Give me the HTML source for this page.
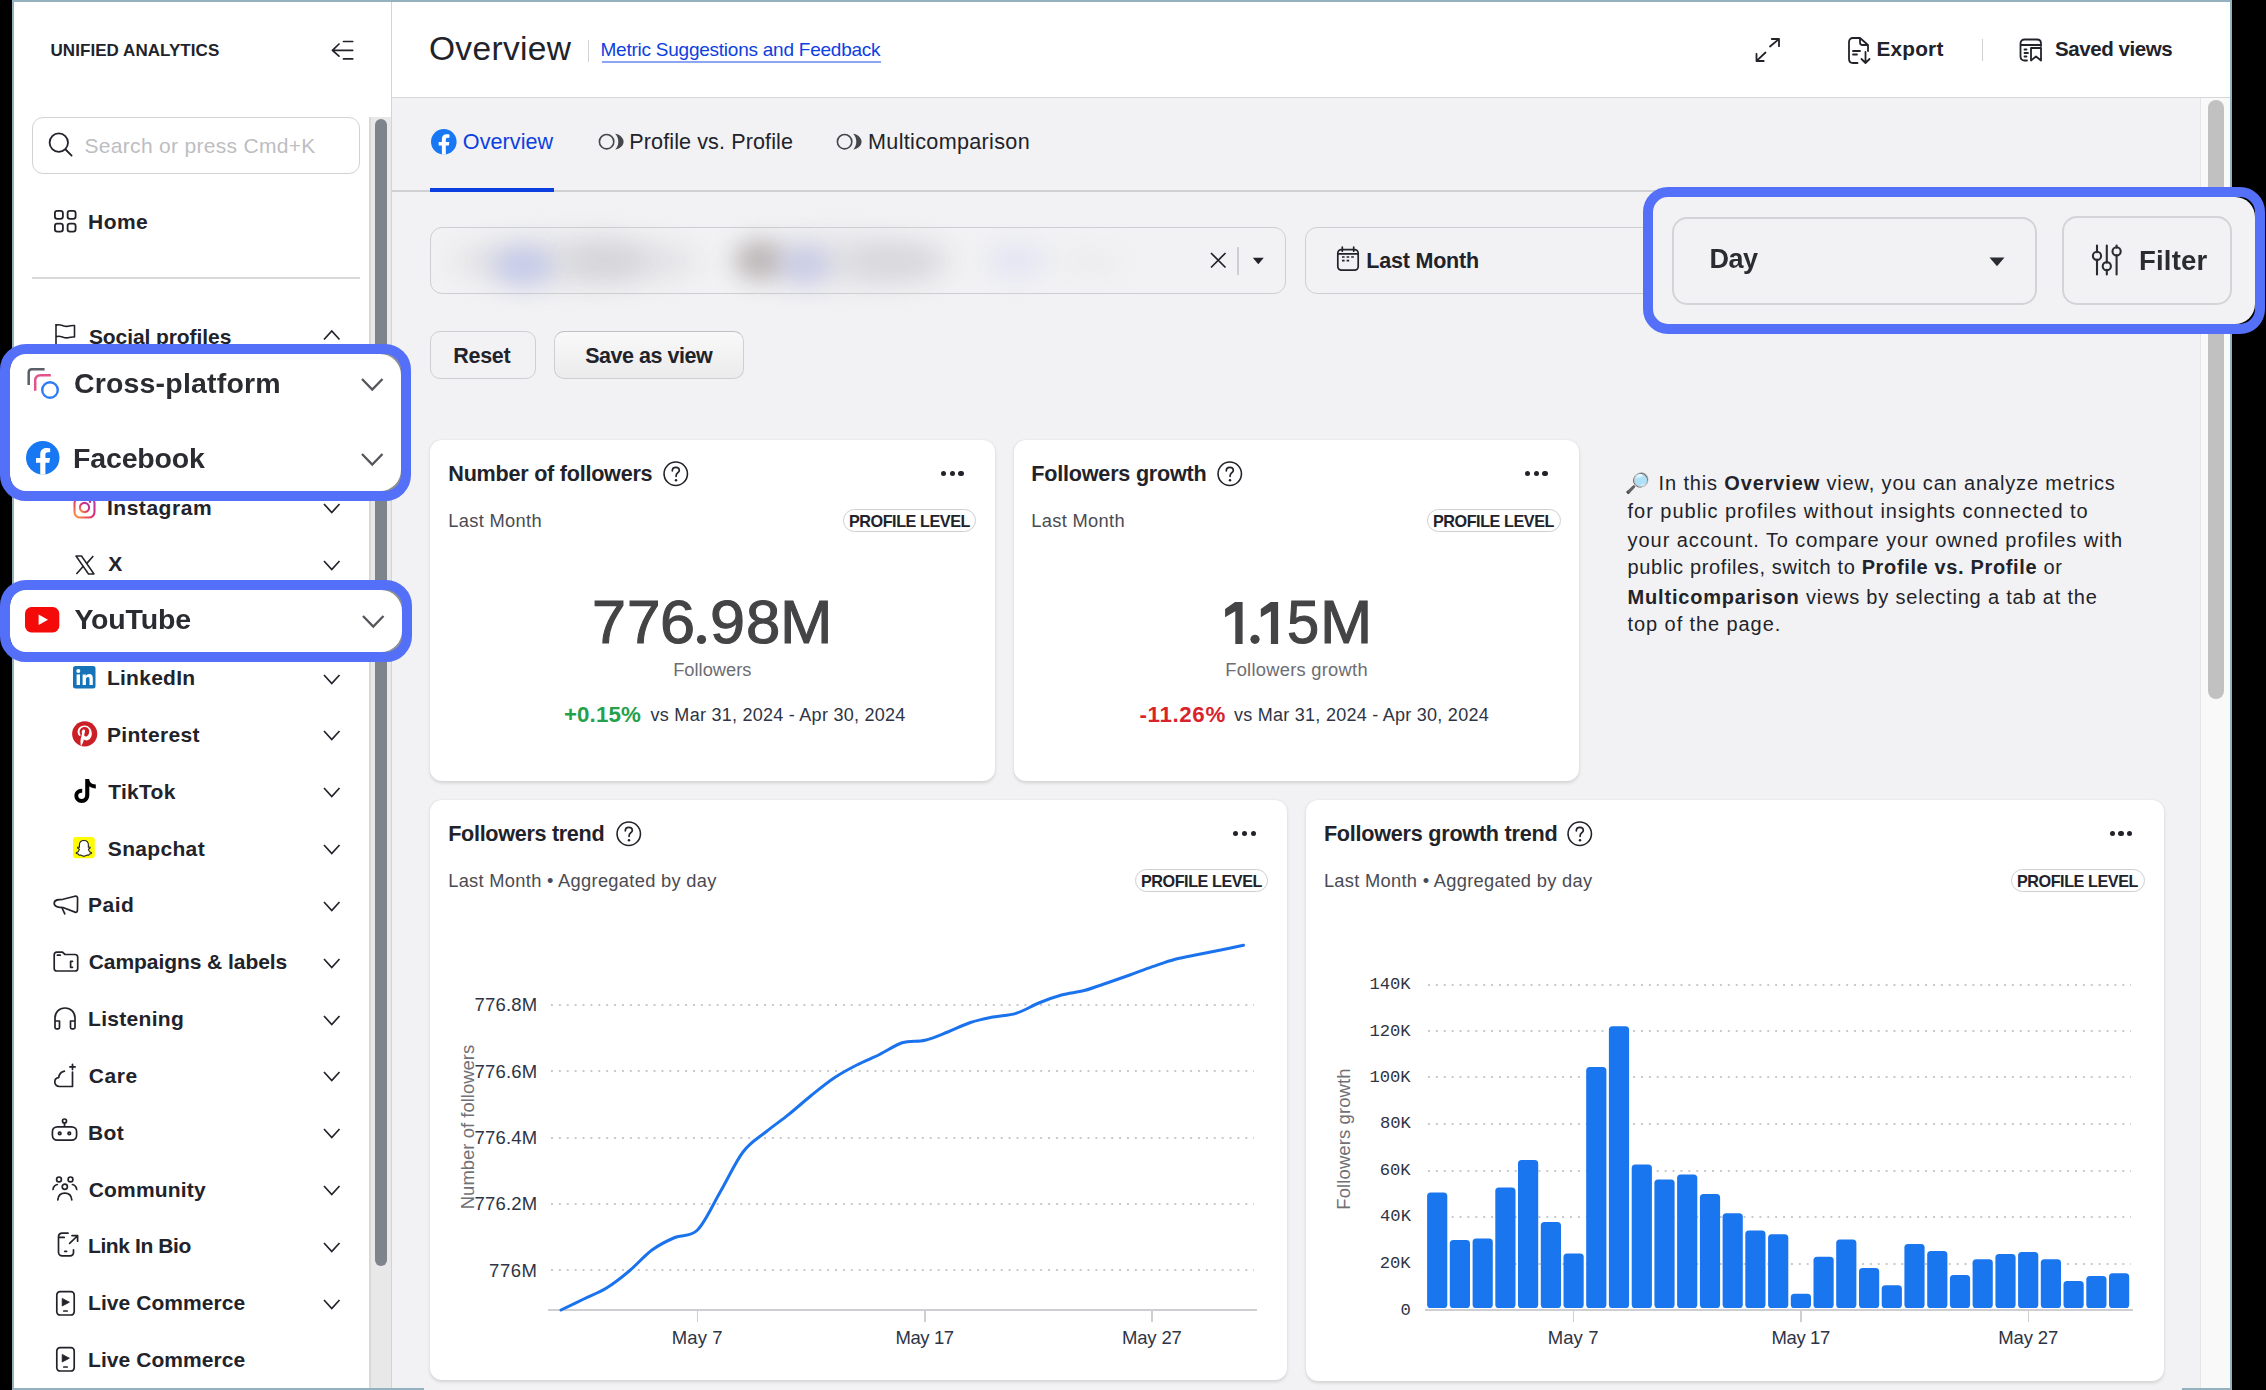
<!DOCTYPE html>
<html><head><meta charset="utf-8">
<style>
*{box-sizing:border-box;margin:0;padding:0}
html,body{width:2266px;height:1390px;overflow:hidden;background:#000;font-family:"Liberation Sans",sans-serif;color:#22232a}
.a{position:absolute}
.t{position:absolute;white-space:nowrap;line-height:1}
svg{position:absolute;overflow:visible}
</style></head><body>
<div class="a" style="left:12px;top:0;width:2220px;height:1390px;border:2px solid #93b1bf;border-bottom:none;background:#fff"></div>
<div class="a" style="left:392px;top:98px;width:1838px;height:1292px;background:#f2f2f4"></div>

<div class="a" style="left:369px;top:117px;width:22px;height:1273px;background:#e8e8e8;border-left:2px solid #d8d8d8"></div>
<div class="a" style="left:375px;top:119px;width:12px;height:1147px;background:#7f838c;border-radius:6px"></div>
<div class="a" style="left:391px;top:2px;width:1px;height:1388px;background:#d4d4d4"></div>
<div class="t" style="left:50.5px;top:41.8px;font-size:17px;font-weight:bold;color:#22232a;letter-spacing:0.06px;">UNIFIED ANALYTICS</div>
<svg style="left:330px;top:38px" width="26" height="24" viewBox="0 0 26 24"><g fill="none" stroke="#22232a" stroke-width="1.7" stroke-linecap="round" stroke-linejoin="round"><path d="M9 6 L2.4 12.3 L9 18.2 M2.4 12.3 H22.7 M13.5 3.5 H22.7 M13.5 20.9 H22.7"/></g></svg>
<div class="a" style="left:32px;top:117px;width:328px;height:57px;border:1.5px solid #d2d2d2;border-radius:11px;background:#fff"></div>
<svg style="left:46px;top:130px" width="28" height="28" viewBox="0 0 28 28"><g fill="none" stroke="#22232a" stroke-width="1.8" stroke-linecap="round"><circle cx="12.8" cy="12.6" r="9.2"/><path d="M19.6 19.5 L25.6 25.6"/></g></svg>
<div class="t" style="left:84.5px;top:135.0px;font-size:21px;font-weight:normal;color:#bdbdc2;letter-spacing:0.31px;">Search or press Cmd+K</div>
<svg style="left:52px;top:208px" width="26" height="26" viewBox="0 0 26 26"><g fill="none" stroke="#22232a" stroke-width="1.8"><rect x="2.9" y="2.9" width="8" height="8" rx="2.3"/><rect x="15.6" y="2.9" width="8" height="8" rx="2.3"/><rect x="2.9" y="15.6" width="8" height="8" rx="2.3"/><rect x="15.6" y="15.6" width="8" height="8" rx="2.3"/></g></svg>
<div class="t" style="left:88.0px;top:211.0px;font-size:21px;font-weight:bold;color:#22232a;letter-spacing:0.48px;">Home</div>
<div class="a" style="left:32px;top:277px;width:328px;height:2px;background:#d9d9dc"></div>
<svg style="left:52px;top:321px" width="26" height="26" viewBox="0 0 26 26"><g fill="none" stroke="#22232a" stroke-width="1.6" stroke-linejoin="round"><path d="M4 24 V3 M4 4.5 C8 1.5 12 7 17 5 C19 4.3 21 4.5 22.5 4.5 V16 C21 16 19 15.8 17 16.5 C12 18.5 8 13 4 16"/></g></svg>
<div class="t" style="left:88.9px;top:326.0px;font-size:21px;font-weight:bold;color:#22232a;letter-spacing:-0.08px;">Social profiles</div>
<svg style="left:322.5px;top:330px" width="17.5" height="10.5"><path d="M1 9.5 L8.75 1 L16.5 9.5" fill="none" stroke="#22232a" stroke-width="1.7"/></svg>
<div class="t" style="left:106.9px;top:496.5px;font-size:21px;font-weight:bold;color:#22232a;letter-spacing:0.54px;">Instagram</div>
<svg style="left:322.5px;top:502.99999999999994px" width="17.5" height="10.5"><path d="M1 1 L8.75 9.5 L16.5 1" fill="none" stroke="#22232a" stroke-width="1.7"/></svg>
<svg style="left:73px;top:496.29999999999995px" width="23" height="23" viewBox="0 0 23 23"><defs><linearGradient id="igg" x1="0" y1="1" x2="1" y2="0"><stop offset="0" stop-color="#f9a03a"/><stop offset="0.45" stop-color="#e1306c"/><stop offset="1" stop-color="#a83ac0"/></linearGradient></defs><g fill="none" stroke="url(#igg)" stroke-width="2.1"><rect x="1.5" y="1.5" width="20" height="20" rx="5.5"/><circle cx="11.5" cy="11.5" r="4.6"/></g><circle cx="17" cy="5.8" r="1.2" fill="#c13584"/></svg>
<div class="t" style="left:108.2px;top:553.4px;font-size:21px;font-weight:bold;color:#22232a;">X</div>
<svg style="left:322.5px;top:559.84px" width="17.5" height="10.5"><path d="M1 1 L8.75 9.5 L16.5 1" fill="none" stroke="#22232a" stroke-width="1.7"/></svg>
<svg style="left:74.5px;top:554.64px" width="20" height="20" viewBox="0 0 20 20"><path d="M1 1 H6.5 L19 19 H13.5 Z" fill="none" stroke="#22232a" stroke-width="1.5" stroke-linejoin="round"/><path d="M18.3 1 L11.6 8.6 M1.4 19 L8.3 11.2" stroke="#22232a" stroke-width="1.6"/></svg>
<div class="t" style="left:106.9px;top:667.0px;font-size:21px;font-weight:bold;color:#22232a;letter-spacing:0.27px;">LinkedIn</div>
<svg style="left:322.5px;top:673.52px" width="17.5" height="10.5"><path d="M1 1 L8.75 9.5 L16.5 1" fill="none" stroke="#22232a" stroke-width="1.7"/></svg>
<svg style="left:73px;top:666.02px" width="23" height="23" viewBox="0 0 23 23"><rect x="0" y="0" width="22.5" height="22.5" rx="2.5" fill="#1673b7"/><rect x="3.6" y="8.4" width="3.4" height="10.6" fill="#fff"/><circle cx="5.3" cy="4.9" r="2" fill="#fff"/><path d="M9.6 8.4 H12.8 V10 C13.5 8.8 14.9 8.1 16.4 8.1 C19 8.1 19.8 9.8 19.8 12.4 V19 H16.5 V13.1 C16.5 11.8 16.2 10.9 14.9 10.9 C13.6 10.9 12.9 11.9 12.9 13.3 V19 H9.6 Z" fill="#fff"/></svg>
<div class="t" style="left:106.9px;top:723.9px;font-size:21px;font-weight:bold;color:#22232a;letter-spacing:0.35px;">Pinterest</div>
<svg style="left:322.5px;top:730.36px" width="17.5" height="10.5"><path d="M1 1 L8.75 9.5 L16.5 1" fill="none" stroke="#22232a" stroke-width="1.7"/></svg>
<svg style="left:71.5px;top:721.16px" width="26" height="26" viewBox="0 0 26 26"><circle cx="12.7" cy="12.8" r="12.6" fill="#cb1f27"/><path d="M12.8 4.6 C8 4.6 5.6 8 5.6 11 C5.6 12.8 6.3 14.4 7.7 15 C8 15.1 8.2 15 8.3 14.7 L8.5 13.9 C8.6 13.6 8.5 13.5 8.3 13.2 C7.9 12.7 7.6 12 7.6 11.1 C7.6 8.4 9.6 6.1 12.8 6.1 C15.6 6.1 17.2 7.8 17.2 10.1 C17.2 13.1 15.9 15.6 13.9 15.6 C12.8 15.6 12 14.7 12.2 13.6 C12.5 12.3 13.1 10.9 13.1 9.9 C13.1 9.1 12.6 8.4 11.7 8.4 C10.6 8.4 9.7 9.6 9.7 11.1 C9.7 12.1 10 12.7 10 12.7 L8.7 18.3 C8.3 19.9 8.6 21.9 8.7 24.6 L9.4 24.8 C9.8 24 10.8 22.1 11.3 20.7 L11.9 18.2 C12.3 18.9 13.3 19.4 14.4 19.4 C17.6 19.4 19.8 16.5 19.8 12.6 C19.8 7.6 16.2 4.6 12.8 4.6 Z" fill="#fff"/></svg>
<div class="t" style="left:108.2px;top:780.7px;font-size:21px;font-weight:bold;color:#22232a;letter-spacing:0.30px;">TikTok</div>
<svg style="left:322.5px;top:787.2px" width="17.5" height="10.5"><path d="M1 1 L8.75 9.5 L16.5 1" fill="none" stroke="#22232a" stroke-width="1.7"/></svg>
<svg style="left:72.5px;top:777.5px" width="24" height="26" viewBox="0 0 24 26"><path d="M12.2 1 H16.2 C16.4 4 18.3 6.2 22.8 6.5 V10.4 C20.2 10.4 18.1 9.6 16.3 8.2 V17 C16.3 21.6 13 25 8.8 25 C4.6 25 1.4 21.8 1.4 17.8 C1.4 13.6 4.8 10.5 9.2 10.8 V14.8 C7 14.4 5.2 15.8 5.2 17.8 C5.2 19.8 6.8 21.1 8.7 21.1 C10.8 21.1 12.2 19.7 12.2 17.3 Z" fill="#000"/></svg>
<div class="t" style="left:107.8px;top:837.6px;font-size:21px;font-weight:bold;color:#22232a;letter-spacing:0.33px;">Snapchat</div>
<svg style="left:322.5px;top:844.04px" width="17.5" height="10.5"><path d="M1 1 L8.75 9.5 L16.5 1" fill="none" stroke="#22232a" stroke-width="1.7"/></svg>
<svg style="left:73.3px;top:836.6399999999999px" width="22" height="22" viewBox="0 0 22 22"><rect x="0" y="0" width="21.8" height="21.3" rx="3" fill="#fffc00"/><path d="M10.9 3.5 C13.9 3.5 15.4 5.6 15.4 8.1 L15.3 10.2 C15.8 10.4 16.5 10 17 10.2 C17.5 10.5 17.2 11.2 16.6 11.5 C16 11.8 15.3 11.9 15.4 12.5 C15.7 13.9 17 15.2 18.3 15.6 C18.8 15.8 18.6 16.3 18.1 16.5 C17.4 16.8 16.6 16.8 16.3 17.2 C16.1 17.6 16 18.2 15.5 18.2 C14.8 18.2 14.2 17.9 13.3 18.3 C12.5 18.6 12 19.3 10.9 19.3 C9.8 19.3 9.3 18.6 8.5 18.3 C7.6 17.9 7 18.2 6.3 18.2 C5.8 18.2 5.7 17.6 5.5 17.2 C5.2 16.8 4.4 16.8 3.7 16.5 C3.2 16.3 3 15.8 3.5 15.6 C4.8 15.2 6.1 13.9 6.4 12.5 C6.5 11.9 5.8 11.8 5.2 11.5 C4.6 11.2 4.3 10.5 4.8 10.2 C5.3 10 6 10.4 6.5 10.2 L6.4 8.1 C6.4 5.6 7.9 3.5 10.9 3.5 Z" fill="#fff" stroke="#222" stroke-width="1.1"/></svg>
<div class="t" style="left:88.0px;top:894.4px;font-size:21px;font-weight:bold;color:#22232a;letter-spacing:0.47px;">Paid</div>
<svg style="left:322.5px;top:900.88px" width="17.5" height="10.5"><path d="M1 1 L8.75 9.5 L16.5 1" fill="none" stroke="#22232a" stroke-width="1.7"/></svg>
<svg style="left:51.5px;top:894.68px" width="28" height="24" viewBox="0 0 28 24"><g fill="none" stroke="#22232a" stroke-width="1.7" stroke-linecap="round" stroke-linejoin="round"><path d="M11 12.5 C6.5 12.5 2.2 11.8 2.2 8.2 C2.2 4.6 6.5 4.3 11 4.3 L23 1.2 C24.5 1 25.5 1.6 25.6 3 L25.4 15.5 C25.4 17 24.4 17.6 23 17.1 Z M9.8 12.5 L12.8 18.8"/></g></svg>
<div class="t" style="left:88.7px;top:951.2px;font-size:21px;font-weight:bold;color:#22232a;letter-spacing:-0.06px;">Campaigns &amp; labels</div>
<svg style="left:322.5px;top:957.72px" width="17.5" height="10.5"><path d="M1 1 L8.75 9.5 L16.5 1" fill="none" stroke="#22232a" stroke-width="1.7"/></svg>
<svg style="left:51.5px;top:949.52px" width="28" height="24" viewBox="0 0 28 24"><g fill="none" stroke="#22232a" stroke-width="1.7" stroke-linecap="round" stroke-linejoin="round"><path d="M2.2 4.8 C2.2 3.2 3.2 2.2 4.8 2.2 H10.5 L13 4.5 H23 C24.8 4.5 25.7 5.5 25.7 7.2 V18.5 C25.7 20.2 24.8 21 23 21 H4.8 C3.2 21 2.2 20.2 2.2 18.5 Z M5.4 5.2 H8.2 M20.5 11.3 H18.6 V17.3 H20.5"/></g></svg>
<div class="t" style="left:88.0px;top:1008.1px;font-size:21px;font-weight:bold;color:#22232a;letter-spacing:0.31px;">Listening</div>
<svg style="left:322.5px;top:1014.5600000000002px" width="17.5" height="10.5"><path d="M1 1 L8.75 9.5 L16.5 1" fill="none" stroke="#22232a" stroke-width="1.7"/></svg>
<svg style="left:52px;top:1005.8600000000001px" width="26" height="24" viewBox="0 0 26 24"><g fill="none" stroke="#22232a" stroke-width="1.7" stroke-linecap="round" stroke-linejoin="round"><path d="M3 16.5 V12 C3 6.3 7 2 13 2 C19 2 23 6.3 23 12 V16.5 M3 15 H7.5 V21.5 C7.5 22.2 7 22.8 6.2 22.8 H4.3 C3.5 22.8 3 22.2 3 21.5 Z M23 15 H18.5 V21.5 C18.5 22.2 19 22.8 19.8 22.8 H21.7 C22.5 22.8 23 22.2 23 21.5 Z"/></g></svg>
<div class="t" style="left:88.7px;top:1064.9px;font-size:21px;font-weight:bold;color:#22232a;letter-spacing:0.62px;">Care</div>
<svg style="left:322.5px;top:1071.4px" width="17.5" height="10.5"><path d="M1 1 L8.75 9.5 L16.5 1" fill="none" stroke="#22232a" stroke-width="1.7"/></svg>
<svg style="left:53px;top:1062.7px" width="26" height="25" viewBox="0 0 26 25"><g fill="none" stroke="#22232a" stroke-width="1.7" stroke-linecap="round" stroke-linejoin="round"><path d="M19.5 9 V23.5 H6.5 C3.5 23.5 1.8 21.3 1.8 19 C1.8 16.5 3.6 14.8 5.7 14.7 C6 11.4 8 9 11.4 8.2 M19.5 1.3 V6.5 M16.9 3.9 H22.1"/></g></svg>
<div class="t" style="left:88.0px;top:1121.8px;font-size:21px;font-weight:bold;color:#22232a;letter-spacing:0.41px;">Bot</div>
<svg style="left:322.5px;top:1128.24px" width="17.5" height="10.5"><path d="M1 1 L8.75 9.5 L16.5 1" fill="none" stroke="#22232a" stroke-width="1.7"/></svg>
<svg style="left:51px;top:1117.54px" width="28" height="25" viewBox="0 0 28 25"><g fill="none" stroke="#22232a" stroke-width="1.7" stroke-linecap="round" stroke-linejoin="round"><circle cx="13.5" cy="3" r="2"/><path d="M13.5 5 V8.8 M6.5 8.8 H20.5 C23.5 8.8 25.6 10.9 25.6 13.7 V17.3 C25.6 20.2 23.5 22.2 20.5 22.2 H6.5 C3.5 22.2 1.4 20.2 1.4 17.3 V13.7 C1.4 10.9 3.5 8.8 6.5 8.8 Z"/><circle cx="8.7" cy="15.4" r="1.3"/><circle cx="18.3" cy="15.4" r="1.3"/></g></svg>
<div class="t" style="left:88.7px;top:1178.6px;font-size:21px;font-weight:bold;color:#22232a;letter-spacing:0.19px;">Community</div>
<svg style="left:322.5px;top:1185.0800000000002px" width="17.5" height="10.5"><path d="M1 1 L8.75 9.5 L16.5 1" fill="none" stroke="#22232a" stroke-width="1.7"/></svg>
<svg style="left:51px;top:1175.88px" width="28" height="26" viewBox="0 0 28 26"><g fill="none" stroke="#22232a" stroke-width="1.7" stroke-linecap="round" stroke-linejoin="round"><circle cx="8" cy="3.4" r="2.4"/><circle cx="19.5" cy="3.4" r="2.4"/><circle cx="13.8" cy="10.8" r="2.6"/><path d="M2 13.5 C2.3 10.8 4 9 6.3 8.5 M25.7 13.5 C25.4 10.8 23.7 9 21.4 8.5 M6.8 23.8 C7.2 19.8 10 17.2 13.8 17.2 C17.6 17.2 20.4 19.8 20.8 23.8"/></g></svg>
<div class="t" style="left:88.0px;top:1235.4px;font-size:21px;font-weight:bold;color:#22232a;letter-spacing:-0.40px;">Link In Bio</div>
<svg style="left:322.5px;top:1241.92px" width="17.5" height="10.5"><path d="M1 1 L8.75 9.5 L16.5 1" fill="none" stroke="#22232a" stroke-width="1.7"/></svg>
<svg style="left:56px;top:1231.22px" width="24" height="27" viewBox="0 0 24 27"><g fill="none" stroke="#22232a" stroke-width="1.7" stroke-linecap="round" stroke-linejoin="round"><path d="M12 2.2 H6.3 C4.2 2.2 2.5 3.7 2.5 5.9 V21.3 C2.5 23.4 4.2 24.9 6.3 24.9 H13.8 C15.9 24.9 17.5 23.4 17.5 21.3 V18.8 M2.8 6.4 H8.2 M8.8 20.3 H10.6 M13.6 12.3 L21.3 5 M16 4.6 H21.6 V10.2"/></g></svg>
<div class="t" style="left:88.0px;top:1292.3px;font-size:21px;font-weight:bold;color:#22232a;letter-spacing:0.07px;">Live Commerce</div>
<svg style="left:322.5px;top:1298.76px" width="17.5" height="10.5"><path d="M1 1 L8.75 9.5 L16.5 1" fill="none" stroke="#22232a" stroke-width="1.7"/></svg>
<svg style="left:55px;top:1289.56px" width="22" height="27" viewBox="0 0 22 27"><g fill="none" stroke="#22232a" stroke-width="1.7" stroke-linecap="round" stroke-linejoin="round"><rect x="1.8" y="1.6" width="17.4" height="23.4" rx="3.3"/><path d="M8.8 21 H12.2"/></g><path d="M7.2 8.4 L14.4 12.2 L7.2 16 Z" fill="#22232a" stroke="#22232a" stroke-width="0.8" stroke-linejoin="round"/></svg>
<div class="t" style="left:88.0px;top:1349.1px;font-size:21px;font-weight:bold;color:#22232a;letter-spacing:0.07px;">Live Commerce</div>
<svg style="left:55px;top:1346.4px" width="22" height="27" viewBox="0 0 22 27"><g fill="none" stroke="#22232a" stroke-width="1.7" stroke-linecap="round" stroke-linejoin="round"><rect x="1.8" y="1.6" width="17.4" height="23.4" rx="3.3"/><path d="M8.8 21 H12.2"/></g><path d="M7.2 8.4 L14.4 12.2 L7.2 16 Z" fill="#22232a" stroke="#22232a" stroke-width="0.8" stroke-linejoin="round"/></svg>
<div class="a" style="left:392px;top:97px;width:1838px;height:1px;background:#d6d6d6"></div>
<div class="t" style="left:428.9px;top:32.3px;font-size:33.5px;font-weight:normal;color:#22232a;letter-spacing:0.35px;">Overview</div>
<div class="a" style="left:587.5px;top:39.5px;width:1.2px;height:22px;background:#d4d4d8"></div>
<div class="t" style="left:600.5px;top:40.1px;font-size:19px;font-weight:normal;color:#0d40e0;letter-spacing:-0.24px;">Metric Suggestions and Feedback</div>
<div class="a" style="left:602px;top:61px;width:279px;height:1.9px;background:#8ea4f5"></div>
<svg style="left:1754px;top:37px" width="28" height="27" viewBox="0 0 28 27"><g fill="none" stroke="#22232a" stroke-width="1.8" stroke-linecap="round" stroke-linejoin="round"><path d="M16 9.5 L24.6 2.4 M17.8 2 H25 V9.2 M11.5 15.5 L2.9 23.6 M2.5 16.8 V24 H9.7"/></g></svg>
<svg style="left:1847px;top:36px" width="28" height="29" viewBox="0 0 28 29"><g fill="none" stroke="#22232a" stroke-width="1.8" stroke-linecap="round" stroke-linejoin="round"><path d="M13 2 H6 C3.5 2 2 3.5 2 6 V23 C2 25.5 3.5 27 6 27 H10.5 M13 2 V6.5 C13 8 14 9 15.5 9 H21 M13 2 L21 9 V15 M6 15 H13 M6 18.5 H10 M18.5 16 V27 M14.5 23 L18.5 27 L22.5 23"/></g></svg>
<div class="t" style="left:1876.5px;top:39.2px;font-size:20.8px;font-weight:bold;color:#22232a;letter-spacing:0.19px;">Export</div>
<div class="a" style="left:1981.5px;top:39px;width:1.5px;height:22px;background:#d0d0d4"></div>
<svg style="left:2019px;top:38px" width="26" height="25" viewBox="0 0 26 25"><g fill="none" stroke="#22232a" stroke-width="1.8" stroke-linecap="round" stroke-linejoin="round"><path d="M8 22.5 H5.5 C3 22.5 1.5 21 1.5 18.5 V5.5 C1.5 3 3 1.5 5.5 1.5 H18 C20.5 1.5 22 3 22 5.5 V8 M1.5 7 H22 M5.5 11.5 H7.5 M5.5 15 H9 M5.5 18.5 H7.5 M12 10 H22 V22.5 L17 18.5 L12 22.5 Z"/></g></svg>
<div class="t" style="left:2055.1px;top:39.4px;font-size:20.5px;font-weight:bold;color:#22232a;letter-spacing:-0.43px;">Saved views</div>
<div class="a" style="left:2200px;top:98px;width:30px;height:1292px;background:#f9f9f9;border-left:1.5px solid #e6e6e6"></div>
<div class="a" style="left:2208px;top:100px;width:16px;height:599px;background:#c1c1c1;border-radius:8px"></div>
<div class="a" style="left:392px;top:190px;width:1808px;height:1.8px;background:#d0d0d3"></div>
<svg style="left:431.4px;top:129.3px" width="25.6" height="25.6" viewBox="0 0 24 24"><circle cx="12" cy="12" r="12" fill="#1877f2"/><path d="M16.7 15.5 L17.2 12.1 H13.9 V9.9 C13.9 9 14.4 8.1 15.8 8.1 H17.3 V5.2 C17.3 5.2 15.9 5 14.6 5 C11.9 5 10.2 6.6 10.2 9.6 V12.1 H7.2 V15.5 H10.2 V24 C10.8 24.1 11.4 24.1 12 24.1 C12.6 24.1 13.3 24.1 13.9 24 V15.5 Z" fill="#fff"/></svg>
<div class="t" style="left:462.8px;top:130.6px;font-size:21.6px;font-weight:normal;color:#0b3fe0;letter-spacing:0.06px;">Overview</div>
<div class="a" style="left:430px;top:188px;width:124px;height:3.5px;background:#0b3fe0"></div>
<svg style="left:598px;top:133px" width="27" height="18" viewBox="0 0 27 18"><circle cx="8.6" cy="8.7" r="7.2" fill="none" stroke="#45464d" stroke-width="1.6"/><path d="M17.2 0.8 C21 1.3 25.6 4.4 25.6 8.7 C25.6 13 21 16.1 17.2 16.6 C19.2 14.6 20.3 11.8 20.3 8.7 C20.3 5.6 19.2 2.8 17.2 0.8 Z" fill="#45464d"/></svg>
<div class="t" style="left:629.3px;top:130.6px;font-size:21.6px;font-weight:normal;color:#22232a;letter-spacing:0.09px;">Profile vs. Profile</div>
<svg style="left:836px;top:133px" width="27" height="18" viewBox="0 0 27 18"><circle cx="8.6" cy="8.7" r="7.2" fill="none" stroke="#45464d" stroke-width="1.6"/><path d="M17.2 0.8 C21 1.3 25.6 4.4 25.6 8.7 C25.6 13 21 16.1 17.2 16.6 C19.2 14.6 20.3 11.8 20.3 8.7 C20.3 5.6 19.2 2.8 17.2 0.8 Z" fill="#45464d"/></svg>
<div class="t" style="left:868.0px;top:130.6px;font-size:21.6px;font-weight:normal;color:#22232a;letter-spacing:0.32px;">Multicomparison</div>
<div class="a" style="left:430px;top:227px;width:856px;height:67px;border:1.5px solid #cfcfd3;border-radius:12px;overflow:hidden"></div>
<div class="a" style="left:450px;top:238px;width:250px;height:46px;border-radius:50%;background:rgba(200,200,205,0.40);filter:blur(14px)"></div>
<div class="a" style="left:492px;top:246px;width:62px;height:40px;border-radius:50%;background:rgba(170,180,235,0.50);filter:blur(12px)"></div>
<div class="a" style="left:565px;top:242px;width:80px;height:38px;border-radius:50%;background:rgba(195,195,200,0.40);filter:blur(13px)"></div>
<div class="a" style="left:728px;top:238px;width:225px;height:46px;border-radius:50%;background:rgba(205,205,210,0.45);filter:blur(14px)"></div>
<div class="a" style="left:735px;top:240px;width:48px;height:40px;border-radius:50%;background:rgba(160,150,148,0.55);filter:blur(11px)"></div>
<div class="a" style="left:780px;top:246px;width:50px;height:38px;border-radius:50%;background:rgba(175,182,232,0.50);filter:blur(12px)"></div>
<div class="a" style="left:850px;top:244px;width:90px;height:36px;border-radius:50%;background:rgba(200,200,204,0.40);filter:blur(13px)"></div>
<div class="a" style="left:985px;top:244px;width:62px;height:34px;border-radius:50%;background:rgba(200,205,240,0.35);filter:blur(12px)"></div>
<div class="a" style="left:1060px;top:248px;width:60px;height:28px;border-radius:50%;background:rgba(225,225,230,0.3);filter:blur(12px)"></div>
<svg style="left:1209px;top:251px" width="18" height="18" viewBox="0 0 18 18"><path d="M2 2 L16.5 16.5 M16.5 2 L2 16.5" stroke="#22232a" stroke-width="1.7"/></svg>
<div class="a" style="left:1237.2px;top:246.5px;width:1.5px;height:28px;background:#cfcfd3"></div>
<svg style="left:1252px;top:257px" width="13" height="8" viewBox="0 0 13 8"><path d="M0.8 0.8 H11.8 L6.3 7.2 Z" fill="#22232a"/></svg>
<div class="a" style="left:1305px;top:227px;width:400px;height:67px;border:1.5px solid #cfcfd3;border-radius:12px"></div>
<svg style="left:1336px;top:246px" width="24" height="26" viewBox="0 0 24 26"><g fill="none" stroke="#22232a" stroke-width="1.7" stroke-linecap="round"><rect x="1.8" y="3.6" width="20.4" height="20.6" rx="3.6"/><path d="M6.3 1.2 V5.2 M17.7 1.2 V5.2 M1.8 7.8 H22.2"/></g><path d="M6 11 H8.6 M10.6 11 H13.2 M15.2 11 H17.8 M6 14.6 H8.6 M10.6 14.6 H13.2" stroke="#22232a" stroke-width="1.6"/></svg>
<div class="t" style="left:1366.3px;top:251.1px;font-size:21.5px;font-weight:bold;color:#22232a;letter-spacing:-0.20px;">Last Month</div>
<div class="a" style="left:430px;top:331px;width:106px;height:48px;border:1.4px solid #cfcfd3;border-radius:10px"></div>
<div class="t" style="left:453.3px;top:345.8px;font-size:21.5px;font-weight:bold;color:#22232a;letter-spacing:-0.32px;">Reset</div>
<div class="a" style="left:554px;top:331px;width:190px;height:48px;border:1.4px solid #cfcfd3;border-top-color:#c0c0c4;border-radius:10px;background:linear-gradient(#f9f9f9,#ebebeb)"></div>
<div class="t" style="left:585.2px;top:345.8px;font-size:21.5px;font-weight:bold;color:#22232a;letter-spacing:-0.47px;">Save as view</div>
<div class="a" style="left:429.5px;top:439.5px;width:565.5px;height:341.5px;background:#fff;border-radius:12px;box-shadow:0 1.5px 3.5px rgba(0,0,0,0.13),0 0 1px rgba(0,0,0,0.06)"></div>
<div class="t" style="left:448.3px;top:462.7px;font-size:21.6px;font-weight:bold;color:#22232a;letter-spacing:-0.25px;">Number of followers</div>
<svg style="left:663.2px;top:460.5px" width="25.5" height="25.5" viewBox="0 0 25.5 25.5"><circle cx="12.75" cy="12.75" r="11.7" fill="none" stroke="#22232a" stroke-width="1.6"/><path d="M9.3 9.8 C9.3 7.6 10.9 6.3 12.8 6.3 C14.8 6.3 16.3 7.6 16.3 9.4 C16.3 11.5 13.1 12 13.1 14.7 V15.3" fill="none" stroke="#22232a" stroke-width="1.7" stroke-linecap="round"/><circle cx="13" cy="19.2" r="1.25" fill="#22232a"/></svg>
<div class="a" style="left:940.8px;top:470.6px;width:5.2px;height:5.2px;border-radius:50%;background:#22232a"></div><div class="a" style="left:949.6px;top:470.6px;width:5.2px;height:5.2px;border-radius:50%;background:#22232a"></div><div class="a" style="left:958.4px;top:470.6px;width:5.2px;height:5.2px;border-radius:50%;background:#22232a"></div>
<div class="t" style="left:448.3px;top:511.8px;font-size:18.3px;font-weight:normal;color:#4a4b52;letter-spacing:0.32px;">Last Month</div>
<div class="a" style="left:843px;top:509px;width:133px;height:23px;border:1.3px solid #cfcfd3;border-radius:12px;background:#fff"></div><div class="t" style="left:848.9px;top:513.3px;font-size:16.2px;font-weight:bold;color:#22232a;letter-spacing:-0.44px;">PROFILE LEVEL</div>
<div class="t" style="left:592.40px;top:592.3px;font-size:61px;font-weight:normal;color:#444446;transform-origin:0 0;transform:scaleX(1.002);-webkit-text-stroke:1.1px #444446;">7</div><div class="t" style="left:626.64px;top:592.3px;font-size:61px;font-weight:normal;color:#444446;transform-origin:0 0;transform:scaleX(0.987);-webkit-text-stroke:1.1px #444446;">7</div><div class="t" style="left:659.50px;top:592.3px;font-size:61px;font-weight:normal;color:#444446;transform-origin:0 0;transform:scaleX(1.033);-webkit-text-stroke:1.1px #444446;">6</div><div class="t" style="left:709.61px;top:592.3px;font-size:61px;font-weight:normal;color:#444446;transform-origin:0 0;transform:scaleX(1.033);-webkit-text-stroke:1.1px #444446;">9</div><div class="t" style="left:745.97px;top:592.3px;font-size:61px;font-weight:normal;color:#444446;transform-origin:0 0;transform:scaleX(1.012);-webkit-text-stroke:1.1px #444446;">8</div><div class="t" style="left:780.31px;top:592.3px;font-size:61px;font-weight:normal;color:#444446;transform-origin:0 0;transform:scaleX(1.033);-webkit-text-stroke:1.1px #444446;">M</div>
<svg style="left:0px;top:0px" width="2266" height="1390" viewBox="0 0 2266 1390"><circle cx="701.5" cy="639.5" r="4.6" fill="#444446"/></svg>
<div class="t" style="left:673.2px;top:660.8px;font-size:18.3px;font-weight:normal;color:#6d6d72;">Followers</div>
<div class="t" style="left:563.9px;top:703.9px;font-size:22.3px;font-weight:bold;color:#23a14b;letter-spacing:0.14px;">+0.15%</div>
<div class="t" style="left:650.6px;top:706.1px;font-size:18px;font-weight:normal;color:#2e3444;letter-spacing:0.26px;">vs Mar 31, 2024 - Apr 30, 2024</div>
<div class="a" style="left:1013.5px;top:439.5px;width:565.5px;height:341.5px;background:#fff;border-radius:12px;box-shadow:0 1.5px 3.5px rgba(0,0,0,0.13),0 0 1px rgba(0,0,0,0.06)"></div>
<div class="t" style="left:1031.3px;top:462.7px;font-size:21.6px;font-weight:bold;color:#22232a;letter-spacing:-0.22px;">Followers growth</div>
<svg style="left:1216.6px;top:460.5px" width="25.5" height="25.5" viewBox="0 0 25.5 25.5"><circle cx="12.75" cy="12.75" r="11.7" fill="none" stroke="#22232a" stroke-width="1.6"/><path d="M9.3 9.8 C9.3 7.6 10.9 6.3 12.8 6.3 C14.8 6.3 16.3 7.6 16.3 9.4 C16.3 11.5 13.1 12 13.1 14.7 V15.3" fill="none" stroke="#22232a" stroke-width="1.7" stroke-linecap="round"/><circle cx="13" cy="19.2" r="1.25" fill="#22232a"/></svg>
<div class="a" style="left:1524.8px;top:470.6px;width:5.2px;height:5.2px;border-radius:50%;background:#22232a"></div><div class="a" style="left:1533.6px;top:470.6px;width:5.2px;height:5.2px;border-radius:50%;background:#22232a"></div><div class="a" style="left:1542.4px;top:470.6px;width:5.2px;height:5.2px;border-radius:50%;background:#22232a"></div>
<div class="t" style="left:1031.3px;top:511.8px;font-size:18.3px;font-weight:normal;color:#4a4b52;letter-spacing:0.32px;">Last Month</div>
<div class="a" style="left:1427px;top:509px;width:134px;height:23px;border:1.3px solid #cfcfd3;border-radius:12px;background:#fff"></div><div class="t" style="left:1432.9px;top:513.3px;font-size:16.2px;font-weight:bold;color:#22232a;letter-spacing:-0.44px;">PROFILE LEVEL</div>
<div class="t" style="left:1286.83px;top:592.3px;font-size:61px;font-weight:normal;color:#444446;transform-origin:0 0;transform:scaleX(0.949);-webkit-text-stroke:1.1px #444446;">5</div><div class="t" style="left:1319.54px;top:592.3px;font-size:61px;font-weight:normal;color:#444446;transform-origin:0 0;transform:scaleX(1.028);-webkit-text-stroke:1.1px #444446;">M</div>
<svg style="left:0px;top:0px" width="2266" height="1390" viewBox="0 0 2266 1390"><path d="M1235.0 601.9 H1242.6 V643.9 H1235.3 V611.2 L1225.1 617.3 V609.1 Z M1270.7 601.9 H1278.1 V643.9 H1270.9 V611.2 L1260.8 617.3 V609.1 Z" fill="#444446"/><circle cx="1255" cy="639.3" r="4.6" fill="#444446"/></svg>
<div class="t" style="left:1225.2px;top:660.8px;font-size:18.3px;font-weight:normal;color:#6d6d72;letter-spacing:0.28px;">Followers growth</div>
<div class="t" style="left:1139.5px;top:703.9px;font-size:22.3px;font-weight:bold;color:#d8232d;letter-spacing:0.65px;">-11.26%</div>
<div class="t" style="left:1234.0px;top:706.1px;font-size:18px;font-weight:normal;color:#2e3444;letter-spacing:0.26px;">vs Mar 31, 2024 - Apr 30, 2024</div>
<div class="t" style="left:1624.6px;top:472.5px;font-size:20px;font-weight:normal;color:#22232a;">&#x1F50E;</div>
<div class="t" style="left:1658.6px;top:472.5px;font-size:20px;color:#22232a;letter-spacing:0.85px">In this <b>Overview</b> view, you can analyze metrics</div>
<div class="t" style="left:1627.6px;top:501.1px;font-size:20px;color:#22232a;letter-spacing:0.97px">for public profiles without insights connected to</div>
<div class="t" style="left:1627.6px;top:529.8px;font-size:20px;color:#22232a;letter-spacing:0.93px">your account. To compare your owned profiles with</div>
<div class="t" style="left:1627.6px;top:557.4px;font-size:20px;color:#22232a;letter-spacing:0.64px">public profiles, switch to <b>Profile vs. Profile</b> or</div>
<div class="t" style="left:1627.6px;top:586.5px;font-size:20px;color:#22232a;letter-spacing:0.80px"><b>Multicomparison</b> views by selecting a tab at the</div>
<div class="t" style="left:1627.6px;top:614.1px;font-size:20px;color:#22232a;letter-spacing:0.91px">top of the page.</div>
<div class="a" style="left:429.8px;top:799.8px;width:856.8px;height:580.6000000000001px;background:#fff;border-radius:12px;box-shadow:0 1.5px 3.5px rgba(0,0,0,0.13),0 0 1px rgba(0,0,0,0.06)"></div>
<div class="t" style="left:448.2px;top:822.5px;font-size:21.6px;font-weight:bold;color:#22232a;letter-spacing:-0.31px;">Followers trend</div>
<svg style="left:615.5px;top:820.7px" width="25.5" height="25.5" viewBox="0 0 25.5 25.5"><circle cx="12.75" cy="12.75" r="11.7" fill="none" stroke="#22232a" stroke-width="1.6"/><path d="M9.3 9.8 C9.3 7.6 10.9 6.3 12.8 6.3 C14.8 6.3 16.3 7.6 16.3 9.4 C16.3 11.5 13.1 12 13.1 14.7 V15.3" fill="none" stroke="#22232a" stroke-width="1.7" stroke-linecap="round"/><circle cx="13" cy="19.2" r="1.25" fill="#22232a"/></svg>
<div class="a" style="left:1232.9px;top:830.6px;width:5.2px;height:5.2px;border-radius:50%;background:#22232a"></div><div class="a" style="left:1241.7px;top:830.6px;width:5.2px;height:5.2px;border-radius:50%;background:#22232a"></div><div class="a" style="left:1250.5px;top:830.6px;width:5.2px;height:5.2px;border-radius:50%;background:#22232a"></div>
<div class="t" style="left:448.2px;top:872.0px;font-size:18.3px;font-weight:normal;color:#4a4b52;letter-spacing:0.30px;">Last Month • Aggregated by day</div>
<div class="a" style="left:1135px;top:869px;width:133px;height:23px;border:1.3px solid #cfcfd3;border-radius:12px;background:#fff"></div><div class="t" style="left:1140.9px;top:873.3px;font-size:16.2px;font-weight:bold;color:#22232a;letter-spacing:-0.44px;">PROFILE LEVEL</div>
<div class="a" style="left:548px;top:1003.8px;width:706px;height:2px;background-image:radial-gradient(circle,#c9c9cc 0.9px,transparent 1.1px);background-size:7.9px 2px;background-repeat:repeat-x"></div>
<div class="t" style="left:474.5px;top:996.0px;font-size:18.5px;font-weight:normal;color:#2e3444;letter-spacing:0.18px;">776.8M</div>
<div class="a" style="left:548px;top:1070.3px;width:706px;height:2px;background-image:radial-gradient(circle,#c9c9cc 0.9px,transparent 1.1px);background-size:7.9px 2px;background-repeat:repeat-x"></div>
<div class="t" style="left:474.5px;top:1062.5px;font-size:18.5px;font-weight:normal;color:#2e3444;letter-spacing:0.18px;">776.6M</div>
<div class="a" style="left:548px;top:1136.7px;width:706px;height:2px;background-image:radial-gradient(circle,#c9c9cc 0.9px,transparent 1.1px);background-size:7.9px 2px;background-repeat:repeat-x"></div>
<div class="t" style="left:474.5px;top:1128.9px;font-size:18.5px;font-weight:normal;color:#2e3444;letter-spacing:0.18px;">776.4M</div>
<div class="a" style="left:548px;top:1202.9px;width:706px;height:2px;background-image:radial-gradient(circle,#c9c9cc 0.9px,transparent 1.1px);background-size:7.9px 2px;background-repeat:repeat-x"></div>
<div class="t" style="left:474.5px;top:1195.1px;font-size:18.5px;font-weight:normal;color:#2e3444;letter-spacing:0.18px;">776.2M</div>
<div class="a" style="left:548px;top:1269.3px;width:706px;height:2px;background-image:radial-gradient(circle,#c9c9cc 0.9px,transparent 1.1px);background-size:7.9px 2px;background-repeat:repeat-x"></div>
<div class="t" style="left:489.1px;top:1261.5px;font-size:18.5px;font-weight:normal;color:#2e3444;letter-spacing:0.55px;">776M</div>
<div class="a" style="left:548px;top:1309px;width:708.6px;height:2px;background:#cfcfd3"></div>
<div class="a" style="left:696.75px;top:1310px;width:1.5px;height:11.5px;background:#cfcfd3"></div>
<div class="t" style="left:671.8px;top:1328.9px;font-size:18.5px;font-weight:normal;color:#2e3444;letter-spacing:0.10px;">May 7</div>
<div class="a" style="left:924.25px;top:1310px;width:1.5px;height:11.5px;background:#cfcfd3"></div>
<div class="t" style="left:895.4px;top:1328.9px;font-size:18.5px;font-weight:normal;color:#2e3444;letter-spacing:-0.40px;">May 17</div>
<div class="a" style="left:1151.45px;top:1310px;width:1.5px;height:11.5px;background:#cfcfd3"></div>
<div class="t" style="left:1121.9px;top:1328.9px;font-size:18.5px;font-weight:normal;color:#2e3444;letter-spacing:-0.13px;">May 27</div>
<div class="t" style="left:378.2px;top:1118.3px;width:180px;font-size:18.5px;line-height:18px;color:#707075;transform:rotate(-90deg);text-align:center;letter-spacing:0px">Number of followers</div>
<svg style="left:0px;top:0px" width="2266" height="1390" viewBox="0 0 2266 1390"><path d="M561.0 1310.0 C564.8 1308.2 576.2 1302.7 583.8 1299.0 C591.3 1295.3 598.9 1292.7 606.5 1288.0 C614.1 1283.3 621.7 1277.3 629.2 1271.0 C636.8 1264.7 644.4 1255.6 652.0 1250.0 C659.6 1244.4 667.2 1240.8 674.8 1237.5 C682.3 1234.2 689.9 1237.6 697.5 1230.0 C705.1 1222.4 712.7 1205.0 720.2 1192.0 C727.8 1179.0 735.4 1162.0 743.0 1152.0 C750.6 1142.0 758.2 1138.2 765.8 1132.0 C773.3 1125.8 780.9 1120.7 788.5 1114.6 C796.1 1108.5 803.7 1101.6 811.2 1095.5 C818.8 1089.4 826.4 1083.1 834.0 1078.0 C841.6 1072.9 849.2 1068.9 856.8 1065.0 C864.3 1061.1 871.9 1058.2 879.5 1054.5 C887.1 1050.8 894.7 1045.2 902.2 1042.8 C909.8 1040.4 917.4 1042.1 925.0 1040.3 C932.6 1038.5 940.2 1035.0 947.8 1032.0 C955.3 1029.0 962.9 1025.0 970.5 1022.5 C978.1 1020.0 985.7 1018.5 993.2 1017.0 C1000.8 1015.5 1008.4 1015.7 1016.0 1013.4 C1023.6 1011.1 1031.2 1006.1 1038.8 1003.0 C1046.3 999.9 1053.9 997.1 1061.5 995.0 C1069.1 992.9 1076.7 992.5 1084.2 990.5 C1091.8 988.5 1099.4 985.6 1107.0 983.0 C1114.6 980.4 1122.2 977.7 1129.8 975.0 C1137.3 972.3 1144.9 969.3 1152.5 966.7 C1160.1 964.1 1167.7 961.2 1175.2 959.2 C1182.8 957.2 1190.4 956.0 1198.0 954.5 C1205.6 953.0 1213.2 951.5 1220.8 950.0 C1228.3 948.5 1239.7 946.1 1243.5 945.3" fill="none" stroke="#1a73ec" stroke-width="3" stroke-linecap="round" stroke-linejoin="round"/></svg>
<div class="a" style="left:1306px;top:799.5px;width:858.0999999999999px;height:581.0px;background:#fff;border-radius:12px;box-shadow:0 1.5px 3.5px rgba(0,0,0,0.13),0 0 1px rgba(0,0,0,0.06)"></div>
<div class="t" style="left:1323.9px;top:822.5px;font-size:21.6px;font-weight:bold;color:#22232a;letter-spacing:-0.24px;">Followers growth trend</div>
<svg style="left:1567.4px;top:820.7px" width="25.5" height="25.5" viewBox="0 0 25.5 25.5"><circle cx="12.75" cy="12.75" r="11.7" fill="none" stroke="#22232a" stroke-width="1.6"/><path d="M9.3 9.8 C9.3 7.6 10.9 6.3 12.8 6.3 C14.8 6.3 16.3 7.6 16.3 9.4 C16.3 11.5 13.1 12 13.1 14.7 V15.3" fill="none" stroke="#22232a" stroke-width="1.7" stroke-linecap="round"/><circle cx="13" cy="19.2" r="1.25" fill="#22232a"/></svg>
<div class="a" style="left:2109.6px;top:830.6px;width:5.2px;height:5.2px;border-radius:50%;background:#22232a"></div><div class="a" style="left:2118.4px;top:830.6px;width:5.2px;height:5.2px;border-radius:50%;background:#22232a"></div><div class="a" style="left:2127.2px;top:830.6px;width:5.2px;height:5.2px;border-radius:50%;background:#22232a"></div>
<div class="t" style="left:1323.9px;top:872.0px;font-size:18.3px;font-weight:normal;color:#4a4b52;letter-spacing:0.30px;">Last Month • Aggregated by day</div>
<div class="a" style="left:2011px;top:869px;width:134px;height:23px;border:1.3px solid #cfcfd3;border-radius:12px;background:#fff"></div><div class="t" style="left:2016.9px;top:873.3px;font-size:16.2px;font-weight:bold;color:#22232a;letter-spacing:-0.44px;">PROFILE LEVEL</div>
<div class="a" style="left:1424.7px;top:983.5px;width:706.3px;height:2px;background-image:radial-gradient(circle,#c9c9cc 0.9px,transparent 1.1px);background-size:7.9px 2px;background-repeat:repeat-x"></div>
<div class="t" style="left:1369.4px;top:975.9px;font-size:17.2px;font-weight:normal;color:#2e3444;font-family:'Liberation Mono',monospace;">140K</div>
<div class="a" style="left:1424.7px;top:1030.1px;width:706.3px;height:2px;background-image:radial-gradient(circle,#c9c9cc 0.9px,transparent 1.1px);background-size:7.9px 2px;background-repeat:repeat-x"></div>
<div class="t" style="left:1369.4px;top:1022.5px;font-size:17.2px;font-weight:normal;color:#2e3444;font-family:'Liberation Mono',monospace;">120K</div>
<div class="a" style="left:1424.7px;top:1076.4px;width:706.3px;height:2px;background-image:radial-gradient(circle,#c9c9cc 0.9px,transparent 1.1px);background-size:7.9px 2px;background-repeat:repeat-x"></div>
<div class="t" style="left:1369.4px;top:1068.8px;font-size:17.2px;font-weight:normal;color:#2e3444;font-family:'Liberation Mono',monospace;">100K</div>
<div class="a" style="left:1424.7px;top:1123px;width:706.3px;height:2px;background-image:radial-gradient(circle,#c9c9cc 0.9px,transparent 1.1px);background-size:7.9px 2px;background-repeat:repeat-x"></div>
<div class="t" style="left:1379.9px;top:1115.4px;font-size:17.2px;font-weight:normal;color:#2e3444;font-family:'Liberation Mono',monospace;">80K</div>
<div class="a" style="left:1424.7px;top:1169.7px;width:706.3px;height:2px;background-image:radial-gradient(circle,#c9c9cc 0.9px,transparent 1.1px);background-size:7.9px 2px;background-repeat:repeat-x"></div>
<div class="t" style="left:1379.7px;top:1162.1px;font-size:17.2px;font-weight:normal;color:#2e3444;font-family:'Liberation Mono',monospace;">60K</div>
<div class="a" style="left:1424.7px;top:1216px;width:706.3px;height:2px;background-image:radial-gradient(circle,#c9c9cc 0.9px,transparent 1.1px);background-size:7.9px 2px;background-repeat:repeat-x"></div>
<div class="t" style="left:1380.0px;top:1208.4px;font-size:17.2px;font-weight:normal;color:#2e3444;font-family:'Liberation Mono',monospace;">40K</div>
<div class="a" style="left:1424.7px;top:1262.7px;width:706.3px;height:2px;background-image:radial-gradient(circle,#c9c9cc 0.9px,transparent 1.1px);background-size:7.9px 2px;background-repeat:repeat-x"></div>
<div class="t" style="left:1379.7px;top:1255.1px;font-size:17.2px;font-weight:normal;color:#2e3444;font-family:'Liberation Mono',monospace;">20K</div>
<div class="t" style="left:1400.5px;top:1301.7px;font-size:17.2px;font-weight:normal;color:#2e3444;font-family:'Liberation Mono',monospace;">0</div>
<svg style="left:0px;top:0px" width="2266" height="1390" viewBox="0 0 2266 1390"><rect x="1427.1" y="1192.6" width="20.2" height="115.4" rx="3.6" fill="#1a76ef"/><rect x="1449.8" y="1240.1" width="20.2" height="67.9" rx="3.6" fill="#1a76ef"/><rect x="1472.6" y="1238.4" width="20.2" height="69.6" rx="3.6" fill="#1a76ef"/><rect x="1495.3" y="1187.4" width="20.2" height="120.6" rx="3.6" fill="#1a76ef"/><rect x="1518.0" y="1160.1" width="20.2" height="147.9" rx="3.6" fill="#1a76ef"/><rect x="1540.8" y="1222.0" width="20.2" height="86.0" rx="3.6" fill="#1a76ef"/><rect x="1563.5" y="1253.6" width="20.2" height="54.4" rx="3.6" fill="#1a76ef"/><rect x="1586.2" y="1067.1" width="20.2" height="240.9" rx="3.6" fill="#1a76ef"/><rect x="1608.9" y="1026.2" width="20.2" height="281.8" rx="3.6" fill="#1a76ef"/><rect x="1631.7" y="1164.4" width="20.2" height="143.6" rx="3.6" fill="#1a76ef"/><rect x="1654.4" y="1179.6" width="20.2" height="128.4" rx="3.6" fill="#1a76ef"/><rect x="1677.1" y="1174.4" width="20.2" height="133.6" rx="3.6" fill="#1a76ef"/><rect x="1699.9" y="1194.0" width="20.2" height="114.0" rx="3.6" fill="#1a76ef"/><rect x="1722.6" y="1213.3" width="20.2" height="94.7" rx="3.6" fill="#1a76ef"/><rect x="1745.3" y="1230.6" width="20.2" height="77.4" rx="3.6" fill="#1a76ef"/><rect x="1768.1" y="1234.2" width="20.2" height="73.8" rx="3.6" fill="#1a76ef"/><rect x="1790.8" y="1293.8" width="20.2" height="14.2" rx="3.6" fill="#1a76ef"/><rect x="1813.5" y="1256.7" width="20.2" height="51.3" rx="3.6" fill="#1a76ef"/><rect x="1836.2" y="1239.4" width="20.2" height="68.6" rx="3.6" fill="#1a76ef"/><rect x="1859.0" y="1268.0" width="20.2" height="40.0" rx="3.6" fill="#1a76ef"/><rect x="1881.7" y="1285.3" width="20.2" height="22.7" rx="3.6" fill="#1a76ef"/><rect x="1904.4" y="1244.0" width="20.2" height="64.0" rx="3.6" fill="#1a76ef"/><rect x="1927.2" y="1250.9" width="20.2" height="57.1" rx="3.6" fill="#1a76ef"/><rect x="1949.9" y="1275.1" width="20.2" height="32.9" rx="3.6" fill="#1a76ef"/><rect x="1972.6" y="1259.2" width="20.2" height="48.8" rx="3.6" fill="#1a76ef"/><rect x="1995.4" y="1253.9" width="20.2" height="54.1" rx="3.6" fill="#1a76ef"/><rect x="2018.1" y="1252.0" width="20.2" height="56.0" rx="3.6" fill="#1a76ef"/><rect x="2040.8" y="1259.2" width="20.2" height="48.8" rx="3.6" fill="#1a76ef"/><rect x="2063.5" y="1281.1" width="20.2" height="26.9" rx="3.6" fill="#1a76ef"/><rect x="2086.3" y="1276.0" width="20.2" height="32.0" rx="3.6" fill="#1a76ef"/><rect x="2109.0" y="1273.3" width="20.2" height="34.7" rx="3.6" fill="#1a76ef"/></svg>
<div class="a" style="left:1424.7px;top:1309px;width:708px;height:2px;background:#cfcfd3"></div>
<div class="a" style="left:1572.65px;top:1310px;width:1.5px;height:11.5px;background:#cfcfd3"></div>
<div class="t" style="left:1547.7px;top:1328.9px;font-size:18.5px;font-weight:normal;color:#2e3444;letter-spacing:0.10px;">May 7</div>
<div class="a" style="left:1800.45px;top:1310px;width:1.5px;height:11.5px;background:#cfcfd3"></div>
<div class="t" style="left:1771.6px;top:1328.9px;font-size:18.5px;font-weight:normal;color:#2e3444;letter-spacing:-0.40px;">May 17</div>
<div class="a" style="left:2027.85px;top:1310px;width:1.5px;height:11.5px;background:#cfcfd3"></div>
<div class="t" style="left:1998.3px;top:1328.9px;font-size:18.5px;font-weight:normal;color:#2e3444;letter-spacing:-0.13px;">May 27</div>
<div class="t" style="left:1264.0px;top:1129.7px;width:160px;font-size:18.5px;line-height:18px;color:#707075;transform:rotate(-90deg);text-align:center;letter-spacing:0.1px">Followers growth</div>
<div class="a" style="left:12px;top:1388px;width:412px;height:2px;background:#93b1bf"></div>
<div class="a" style="left:2182px;top:1388px;width:50px;height:2px;background:#93b1bf"></div>
<div class="a" style="left:200px;top:349px;width:205px;height:146px;background:#8c8f97;border-radius:18px"></div>
<div class="a" style="left:10px;top:353.5px;width:391px;height:137.5px;background:#fff;border-radius:16px 21px 21px 16px"></div>
<div class="a" style="left:0px;top:343.5px;width:411px;height:157.5px;border:10.4px solid #5570f8;border-radius:26px;background:transparent"></div>
<div class="a" style="left:0;top:0;width:2266px;height:1390px;filter:blur(0.5px)">
<svg style="left:20px;top:360px" width="50" height="45" viewBox="0 0 50 45"><path d="M8.7 25 V12.5 C8.7 10.5 9.9 9.2 11.9 9.2 H24.6" fill="none" stroke="#5a5e66" stroke-width="2.5"/><path d="M15.2 30.8 V20.5 C15.2 17.2 17.2 15.2 20.5 15.2 H30.8" fill="none" stroke="#e2528b" stroke-width="2.5"/><circle cx="30" cy="30" r="7.8" fill="none" stroke="#2f7bf5" stroke-width="2.4"/></svg>
<div class="t" style="left:73.9px;top:369.3px;font-size:28.5px;font-weight:bold;color:#2b2c31;letter-spacing:0.19px;">Cross-platform</div>
<svg style="left:361px;top:378px" width="22.5" height="12.5"><path d="M1 1 L11.25 11.5 L21.5 1" fill="none" stroke="#55565c" stroke-width="2.3"/></svg>
<svg style="left:26px;top:441px" width="33.5" height="33.5" viewBox="0 0 24 24"><circle cx="12" cy="12" r="12" fill="#1877f2"/><path d="M16.7 15.5 L17.2 12.1 H13.9 V9.9 C13.9 9 14.4 8.1 15.8 8.1 H17.3 V5.2 C17.3 5.2 15.9 5 14.6 5 C11.9 5 10.2 6.6 10.2 9.6 V12.1 H7.2 V15.5 H10.2 V24 C10.8 24.1 11.4 24.1 12 24.1 C12.6 24.1 13.3 24.1 13.9 24 V15.5 Z" fill="#fff"/></svg>
<div class="t" style="left:73.0px;top:444.4px;font-size:28.5px;font-weight:bold;color:#2b2c31;letter-spacing:-0.16px;">Facebook</div>
<svg style="left:361px;top:453px" width="22.5" height="12.5"><path d="M1 1 L11.25 11.5 L21.5 1" fill="none" stroke="#55565c" stroke-width="2.3"/></svg>
</div>
<div class="a" style="left:200px;top:586px;width:206px;height:70px;background:#8c8f97;border-radius:18px"></div>
<div class="a" style="left:10px;top:590px;width:391.5px;height:61.8px;background:#fff;border-radius:16px 21px 21px 16px"></div>
<div class="a" style="left:0px;top:580px;width:411.5px;height:81.60000000000002px;border:10.3px solid #5570f8;border-radius:26px;background:transparent"></div>
<div class="a" style="left:0;top:0;width:2266px;height:1390px;filter:blur(0.5px)">
<svg style="left:25px;top:607px" width="35" height="26" viewBox="0 0 35 26"><rect x="0" y="0" width="34.3" height="25.4" rx="6.5" fill="#f50a0a"/><path d="M13.6 7.5 L23 12.7 L13.6 17.9 Z" fill="#fff"/></svg>
<div class="t" style="left:74.4px;top:605.1px;font-size:28.5px;font-weight:bold;color:#2b2c31;letter-spacing:-0.17px;">YouTube</div>
<svg style="left:362px;top:615px" width="22.5" height="12.5"><path d="M1 1 L11.25 11.5 L21.5 1" fill="none" stroke="#55565c" stroke-width="2.3"/></svg>
</div>
<div class="a" style="left:1900px;top:193px;width:359px;height:135px;background:#000;border-radius:18px"></div>
<div class="a" style="left:1652.5px;top:196.8px;width:602px;height:127.5px;background:#f2f2f4;border-radius:14px 20px 20px 14px"></div>
<div class="a" style="left:1642.8px;top:187px;width:622.2px;height:147.3px;border:10.2px solid #5570f8;border-radius:25px;background:transparent"></div>
<div class="a" style="left:0;top:0;width:2266px;height:1390px;filter:blur(0.5px)">
<div class="a" style="left:1672.2px;top:216.5px;width:364.5px;height:88px;border:2px solid #d4d4d8;border-radius:15px"></div>
<div class="t" style="left:1709.4px;top:246.3px;font-size:27px;font-weight:bold;color:#2b2c31;letter-spacing:-0.51px;">Day</div>
<svg style="left:1989px;top:256.5px" width="16" height="10" viewBox="0 0 16 10"><path d="M0.5 0.5 H15.5 L8 9.3 Z" fill="#2b2c31"/></svg>
<div class="a" style="left:2062px;top:216.2px;width:170px;height:88.4px;border:2px solid #d4d4d8;border-radius:15px"></div>
<svg style="left:2092px;top:244px" width="33" height="33" viewBox="0 0 33 33"><g fill="none" stroke="#2b2c31" stroke-width="2.1" stroke-linecap="round"><path d="M5 1.5 V8.3 M5 15.5 V30.5 M14.8 1.5 V18.6 M14.8 25.8 V30.5 M24.6 1.5 V3.8 M24.6 11 V30.5"/><circle cx="5" cy="11.9" r="4.1"/><circle cx="14.8" cy="22.2" r="4.1"/><circle cx="24.6" cy="7.4" r="4.1"/></g></svg>
<div class="t" style="left:2139.1px;top:247.3px;font-size:27.5px;font-weight:bold;color:#2b2c31;letter-spacing:0.17px;">Filter</div>
</div>
</body></html>
